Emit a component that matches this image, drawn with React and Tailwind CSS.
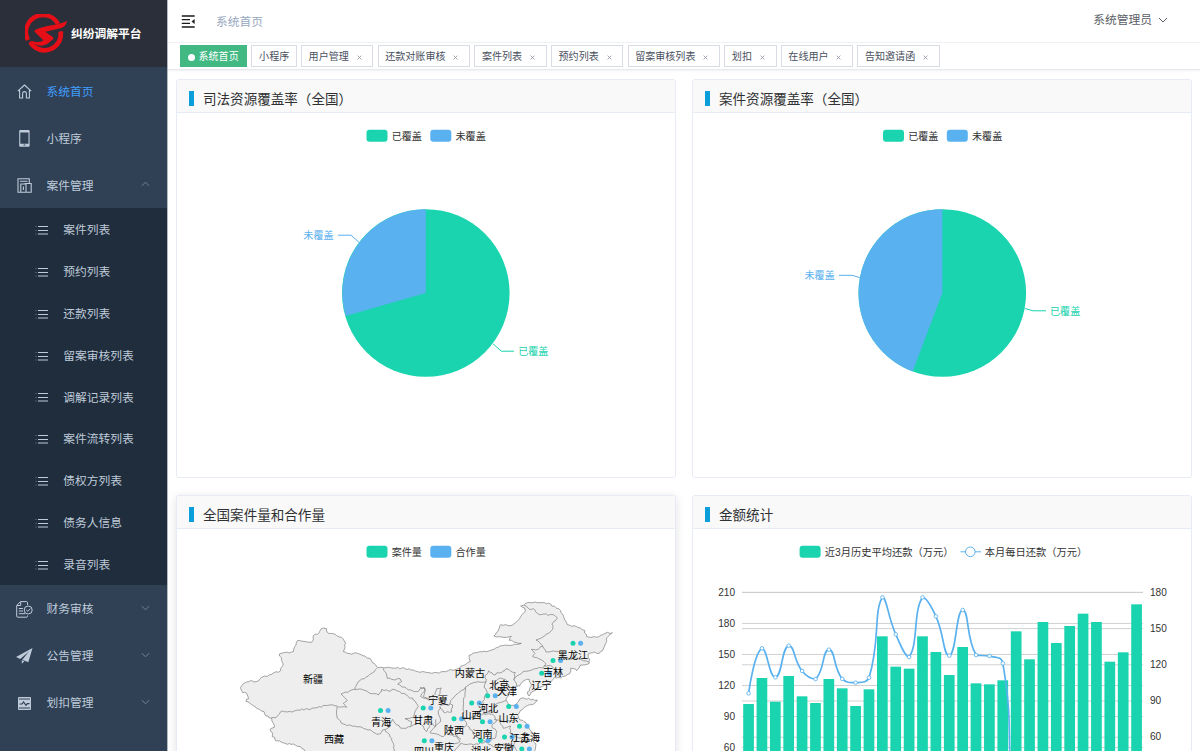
import React from 'react';

const GREEN = '#19d4ae';
const BLUE = '#5ab1ef';
const CHART_FONT = '"Liberation Sans", "Noto Sans CJK SC", sans-serif';

/* ---------- icons ---------- */

function Logo() {
  return (
    <svg className="h-[40px] w-[42px] shrink-0" viewBox="75 42 126 120" fill="none">
      <path d="M84 120A50 50 0 0 1 174 72" stroke="#e60f17" strokeWidth="13" />
      <path d="M182 94A49 49 0 0 1 91 126" stroke="#e60f17" strokeWidth="14" />
      <path
        d="M201 63Q197 80 184 84L136 95L158 111Q164 116 156 120Q140 137 124 137Q105 136 88 124L112 126Q125 127 130 121L104 95Q101 91 107 89Q125 80 165 74Q185 71 201 63Z"
        fill="#e60f17"
      />
    </svg>
  );
}

function HomeIcon() {
  return (
    <svg className="h-[15px] w-[15px]" viewBox="0 0 15 15" fill="none" stroke="currentColor" strokeWidth="1.1" strokeLinejoin="round">
      <path d="M.8 7.2L7.5 1L14.2 7.2M2.6 6V14H5.6V9.5a1.9 1.9 0 0 1 3.8 0V14h3V6" />
    </svg>
  );
}

function PhoneIcon() {
  return (
    <svg className="h-[17px] w-[15px]" viewBox="0 0 15 17">
      <path
        fillRule="evenodd"
        fill="currentColor"
        d="M3.2 0h8.4q1 0 1 1v14.8q0 1-1 1H3.2q-1 0-1-1V1q0-1 1-1zM3.3 2.4v11.3h8.2V2.4zM6.6 14.6v1h1.8v-1z"
      />
    </svg>
  );
}

function CaseIcon() {
  return (
    <svg className="h-[15px] w-[15px]" viewBox="0 0 15 15" fill="none" stroke="currentColor" strokeWidth="1.1">
      <path d="M3.5 14.3H1V.8H12.3V5M3 3.2H10.5" />
      <path d="M3.8 14.3V6H9V14.3ZM7.6 5.5H14.2V14.3H3.5M6.4 8.5V12" />
    </svg>
  );
}

function ListIcon() {
  return (
    <svg className="h-[10px] w-[14px]" viewBox="0 0 14 10" stroke="currentColor" strokeWidth="1">
      <path d="M3 1.5H13M3 5.5H13M3 9H13" />
      <path d="M.5 1.5H1.5M.5 5.5H1.5M.5 9H1.5" opacity=".5" />
    </svg>
  );
}

function AuditIcon() {
  return (
    <svg className="h-[17px] w-[17px]" viewBox="0 0 17 17" fill="none" stroke="currentColor" strokeWidth="1">
      <path d="M11.5 4V1.6Q11.5.6 10.5.6H4.5L.7 4.4V15.2Q.7 16.2 1.7 16.2H10.5Q11.5 16.2 11.5 14.5M4.7.8V4.5H1" />
      <circle cx="12.2" cy="9" r="4" />
      <path d="M10.3 8.9L11.8 10.3L14.3 7.6M2.8 7.5H7M2.8 10H7M2.8 12.7H9" />
    </svg>
  );
}

function PlaneIcon() {
  return (
    <svg className="h-[16px] w-[17px]" viewBox="0 0 17 16" fill="currentColor">
      <path d="M16.5 0L0 9L4.3 10.9L13.2 3.2L6.3 11.7L12.3 14.2ZM5.8 12.3V15.8L8.4 13.3Z" />
    </svg>
  );
}

function WaveIcon() {
  return (
    <svg className="h-[13px] w-[13px]" viewBox="0 0 13 13" fill="none">
      <rect width="13" height="13" rx="1" fill="currentColor" />
      <path d="M1 2H12M1 11H12" stroke="#304156" strokeWidth="1" />
      <path d="M1.5 7H4L5.5 5L8 8.3L9.3 6.6H11.5" stroke="#304156" strokeWidth="1.2" />
    </svg>
  );
}

function Chevron({ up, className }) {
  return (
    <svg className={className} viewBox="0 0 10 6" fill="none" stroke="currentColor" strokeWidth="1">
      <path d={up ? 'M1 5L5 1L9 5' : 'M1 1L5 5L9 1'} />
    </svg>
  );
}

/* ---------- sidebar ---------- */

function MenuItem({ icon, label, active, arrow }) {
  return (
    <div className="flex h-[46.9px] shrink-0 items-center pt-0.5 text-[#bfcbd9]">
      <span className="ml-[15.5px] flex w-[18px] justify-center">{icon}</span>
      <span className={active ? 'ml-[13px] flex-1 text-[#409eff]' : 'ml-[13px] flex-1'}>{label}</span>
      {arrow && <Chevron up={arrow === 'up'} className="mr-[17px] mb-[3px] h-[6px] w-[9px] text-[#808895]" />}
    </div>
  );
}

const SUB_ITEMS = ['案件列表', '预约列表', '还款列表', '留案审核列表', '调解记录列表', '案件流转列表', '债权方列表', '债务人信息', '录音列表'];

function Sidebar() {
  return (
    <aside className="flex w-[168px] shrink-0 flex-col overflow-hidden border-r border-[#b5bac1] bg-[#304156] text-[11.75px]">
      <div className="flex h-[67.4px] shrink-0 items-center bg-[#2b2f3a] pl-[25px]">
        <Logo />
        <span className="ml-1 text-[11.75px] font-bold text-white">纠纷调解平台</span>
      </div>
      <MenuItem icon={<HomeIcon />} label="系统首页" active />
      <MenuItem icon={<PhoneIcon />} label="小程序" />
      <MenuItem icon={<CaseIcon />} label="案件管理" arrow="up" />
      <div className="shrink-0 bg-[#1f2d3d] text-[#bfcbd9]">
        {SUB_ITEMS.map((label) => (
          <div key={label} className="flex h-[41.87px] items-center pt-0.5 pl-[35px]">
            <ListIcon />
            <span className="ml-[14.2px]">{label}</span>
          </div>
        ))}
      </div>
      <MenuItem icon={<AuditIcon />} label="财务审核" arrow="down" />
      <MenuItem icon={<PlaneIcon />} label="公告管理" arrow="down" />
      <MenuItem icon={<WaveIcon />} label="划扣管理" arrow="down" />
    </aside>
  );
}

/* ---------- header ---------- */

const TAGS = [
  { label: '小程序', fixed: true },
  { label: '用户管理' },
  { label: '还款对账审核' },
  { label: '案件列表' },
  { label: '预约列表' },
  { label: '留案审核列表' },
  { label: '划扣' },
  { label: '在线用户' },
  { label: '告知邀请函' },
];

function Navbar() {
  return (
    <div className="flex h-[42px] shrink-0 items-center justify-between pr-8 pl-[13px]">
      <div className="flex items-center">
        <svg className="h-[13px] w-[14px]" viewBox="0 0 14 13" stroke="#1a1a1a" strokeWidth="1.3">
          <path d="M.8 1H13.7M.8 4.7H9M.8 8.4H9M.8 12H13.7" />
          <path d="M13.4 4.5V8.5L10.8 6.5Z" fill="#1a1a1a" strokeWidth=".5" />
        </svg>
        <span className="ml-[21px] pt-0.5 text-[11.75px] text-[#97a8be]">系统首页</span>
      </div>
      <div className="mb-[3px] flex items-center text-[11.75px] text-[#5a5e66]">
        系统管理员
        <Chevron className="ml-1.5 h-[6px] w-[10px]" />
      </div>
    </div>
  );
}

function TagsView() {
  return (
    <div className="flex h-[28px] shrink-0 items-start gap-[4.2px] border-t border-b border-t-[#f0f1f3] border-b-[#e6e9ef] pt-[2px] pl-3 text-[10.05px] text-[#495060] shadow-[0_1px_2px_rgba(0,0,0,0.06)]">
      <div className="flex h-[22px] w-[67.3px] items-center bg-[#42b983] pt-0.5 pl-[7.5px] text-white">
        <span className="mr-1 h-[7px] w-[7px] rounded-full bg-white" />
        系统首页
      </div>
      {TAGS.map((t) => (
        <div key={t.label} className="flex h-[22px] items-center border border-[#d8dce5] px-[6.6px] pt-0.5">
          {t.label}
          {!t.fixed && (
            <svg className="mt-px mr-[4.2px] ml-[7.85px] h-[5px] w-[5px]" viewBox="0 0 5 5" stroke="#8a909b" strokeWidth=".8">
              <path d="M.6.6L4.4 4.4M4.4.6L.6 4.4" />
            </svg>
          )}
        </div>
      ))}
    </div>
  );
}

/* ---------- charts ---------- */

function LegendBox({ x, y, color, label, size }) {
  return (
    <g>
      <rect x={x} y={y - 6} width="21" height="12" rx="3" fill={color} />
      <text x={x + 25.2} y={y + 3.7} fill="#333" fontSize={size}>{label}</text>
    </g>
  );
}

function PieChart({ left0, cx, end, left, right }) {
  const cy = 293;
  const r = 83.8;
  const [ex, ey] = end;
  return (
    <svg className="block h-[364px] w-full" viewBox={`${left0} 113 498 364`} fontFamily={CHART_FONT} fontSize="10.1">
      <LegendBox x={cx - 59.3} y={135.8} color={GREEN} label="已覆盖" />
      <LegendBox x={cx + 4.5} y={135.8} color={BLUE} label="未覆盖" />
      <circle cx={cx} cy={cy} r={r} fill={GREEN} />
      <path d={`M${cx} ${cy}L${ex} ${ey}A${r} ${r} 0 0 1 ${cx} ${cy - r}Z`} fill={BLUE} />
      <path d={left.line} fill="none" stroke={BLUE} />
      <path d={right.line} fill="none" stroke={GREEN} />
      <text x={left.x} y={left.y} fill={BLUE}>未覆盖</text>
      <text x={right.x} y={right.y} fill={GREEN}>已覆盖</text>
    </svg>
  );
}

// Adds small deterministic wiggles to a polyline so borders look surveyed.
function rough(points, close) {
  let seed = 7;
  const rnd = () => {
    seed = (seed * 1103 + 4721) % 9973;
    return seed / 9973 - 0.5;
  };
  let d = `M${points[0][0]} ${points[0][1]}`;
  for (let i = 1; i < points.length; i += 1) {
    const [x0, y0] = points[i - 1];
    const [x1, y1] = points[i];
    const len = Math.hypot(x1 - x0, y1 - y0);
    const n = Math.max(1, Math.round(len / 7));
    for (let k = 1; k <= n; k += 1) {
      const j = k === n ? 0 : 5;
      d += `L${(x0 + ((x1 - x0) * k) / n + rnd() * j).toFixed(1)} ${(y0 + ((y1 - y0) * k) / n + rnd() * j).toFixed(1)}`;
    }
  }
  return close ? `${d}Z` : d;
}

const OUTLINE = [
  [32, 292], [42, 280], [62, 272], [72, 276], [85, 273], [95, 262], [125, 253], [152, 242], [160, 222], [148, 192], [190, 185], [194, 170], [203, 151], [245, 157], [250, 150], [250, 137],
  [268, 128], [274, 116], [290, 116], [292, 127], [320, 137], [338, 145], [347, 160], [340, 185], [352, 190], [385, 191], [420, 205], [442, 232],
  [460, 233], [525, 235], [570, 247], [620, 248], [675, 239], [700, 226], [721, 214], [717, 196], [728, 190], [770, 185],
  [810, 168], [860, 163], [874, 160], [838, 151], [844, 139], [815, 141], [792, 138], [812, 104], [846, 106], [860, 96], [886, 64], [884, 54],
  [872, 48], [892, 38], [930, 38], [962, 42], [992, 62], [1012, 104], [1040, 110], [1064, 121], [1070, 140], [1100, 142],
  [1125, 130], [1147, 128], [1132, 142], [1124, 168], [1108, 190], [1092, 186], [1075, 192], [1078, 220], [1050, 226], [1040, 242],
  [1022, 234], [1020, 250], [992, 264], [974, 262], [960, 280], [930, 292], [910, 304], [897, 318], [892, 306], [904, 288],
  [898, 268], [882, 272], [868, 288], [850, 292], [834, 310], [828, 328], [836, 344], [856, 345], [876, 324], [922, 330],
  [914, 340], [886, 350], [862, 374], [866, 384], [888, 398], [904, 425], [920, 440], [908, 450], [918, 462], [912, 490],
  [225, 490], [222, 478], [190, 462], [165, 460], [135, 450], [120, 418], [133, 412], [130, 400], [125, 384], [108, 378], [102, 365], [80, 355], [60, 340],
  [48, 334], [56, 326], [50, 310], [38, 308], [32, 292],
];

const BORDERS = [
  [[125, 382], [138, 383], [152, 365], [185, 366], [215, 357], [240, 360], [268, 350], [300, 345], [325, 351], [350, 352], [340, 340], [352, 332], [333, 312], [375, 298], [385, 275], [415, 258], [440, 235]],
  [[375, 298], [400, 300], [420, 310], [445, 315], [455, 298], [475, 303], [495, 299], [530, 315], [550, 330], [565, 350], [555, 365], [552, 382], [525, 386], [545, 395], [543, 410], [520, 415], [500, 405], [488, 388], [480, 410], [458, 420], [452, 431], [440, 433], [425, 422], [400, 415], [340, 402], [322, 385], [320, 350]],
  [[460, 235], [472, 265], [495, 270], [510, 266], [515, 275], [503, 282], [535, 300], [560, 305], [582, 291], [585, 300], [572, 320], [595, 330], [612, 324]],
  [[465, 420], [480, 440], [490, 460], [492, 488]],
  [[545, 408], [560, 400], [575, 405], [590, 425], [605, 400], [615, 410], [618, 388]],
  [[570, 292], [585, 296], [580, 320], [600, 328]],
  [[615, 315], [620, 296], [634, 294], [630, 310], [620, 322], [640, 342], [668, 345], [665, 366], [640, 366], [630, 350], [625, 372], [632, 395], [615, 410], [600, 428], [620, 432], [640, 440], [648, 430], [680, 438], [693, 448]],
  [[630, 345], [655, 346], [672, 322], [706, 292], [705, 320], [700, 345], [700, 380], [710, 405], [690, 420], [680, 438], [690, 455], [670, 462]],
  [[706, 292], [730, 278], [768, 276], [766, 256], [776, 242], [790, 254], [815, 248], [828, 236], [856, 248], [852, 270], [860, 288]],
  [[850, 268], [876, 248], [905, 240], [942, 230], [948, 222], [930, 208], [908, 200], [915, 190], [904, 178], [925, 178], [938, 168], [918, 150], [944, 138], [968, 118], [966, 102], [982, 84], [970, 74], [928, 74], [915, 60], [895, 55], [882, 45]],
  [[938, 168], [948, 186], [985, 184], [1000, 205], [1040, 205], [1076, 216]],
  [[942, 228], [965, 228], [978, 245], [990, 262]],
  [[768, 276], [762, 292], [772, 308], [758, 335], [760, 370], [730, 382], [702, 385]],
  [[760, 370], [792, 366], [795, 345], [828, 332]],
  [[795, 275], [812, 264], [830, 272], [836, 290], [822, 300], [800, 296], [790, 285], [795, 275]],
  [[760, 372], [790, 375], [800, 392], [785, 408], [800, 425], [795, 445], [770, 455], [740, 442], [712, 408]],
  [[792, 388], [820, 396], [850, 392], [864, 384]],
  [[810, 396], [820, 415], [842, 408], [840, 430], [860, 440], [850, 466], [865, 488]],
  [[860, 440], [880, 450], [908, 450]],
  [[670, 488], [690, 462], [730, 465], [765, 455], [790, 470], [820, 462], [850, 470]],
];

const PROVINCES = [
  ['新疆', 313, 679], ['西藏', 334, 739.5], ['青海', 381, 722], ['甘肃', 423, 720], ['宁夏', 438, 700.5], ['内蒙古', 470, 673],
  ['北京', 499, 685], ['天津', 507, 691.5], ['河北', 488, 708], ['山西', 471.5, 715], ['陕西', 454, 730], ['河南', 482.5, 734],
  ['山东', 508.5, 718.5], ['江苏', 520, 738], ['上海', 530, 737], ['安徽', 504, 748], ['湖北', 481, 751], ['重庆', 444, 747.5],
  ['四川', 424, 751], ['黑龙江', 573, 655], ['吉林', 553, 672.5], ['辽宁', 541.5, 685.5],
];

const MARKS = [
  [380.5, 710.5], [423.2, 708], [424.3, 740.7], [454, 718.8], [471.7, 703], [487.6, 695.8], [482.5, 721.8], [480.5, 740.5],
  [508.7, 706.6], [519.5, 726.2], [504.5, 737], [521.8, 749], [573, 643.3], [553, 660.5], [541.7, 673.2],
];

function MapChart() {
  return (
    <svg className="block h-[223px] w-full" viewBox="177 529 498 223" fontFamily={CHART_FONT} fontSize="10.1">
      <LegendBox x={366.5} y={551.8} color={GREEN} label="案件量" />
      <LegendBox x={430.3} y={551.8} color={BLUE} label="合作量" />
      <g transform="translate(230 590) scale(0.33333)" stroke="#6b6b6b" strokeWidth="1.8" strokeLinejoin="round">
        <path d={rough(OUTLINE, true)} fill="#eee" />
        {BORDERS.map((b, i) => (
          <path key={i} d={rough(b)} fill="none" />
        ))}
      </g>
      {MARKS.map(([x, y]) => (
        <g key={`${x}-${y}`}>
          <circle cx={x} cy={y} r="2.5" fill={GREEN} />
          <circle cx={x + 7.6} cy={y} r="2.5" fill={BLUE} />
        </g>
      ))}
      {PROVINCES.map(([name, x, y]) => (
        <text key={name} x={x} y={y + 3.7} textAnchor="middle" fill="#000">{name}</text>
      ))}
    </svg>
  );
}

const BAR_TOPS = [642, 564, 635, 558, 619, 639, 567, 595, 648, 598, 439, 530, 536, 439, 486, 555, 471, 580, 583, 571, 424, 508, 396, 459, 408, 371, 396, 515, 487, 343];
const LINE_TOPS = [610, 475, 562, 467, 543, 567, 479, 567, 578, 563, 322, 433, 501, 322, 379, 497, 360, 495, 498, 520, 958, 958];

// Smooth curve whose control points stay inside the span of neighbouring points.
function smoothPath(pts) {
  const clamp = (v, a, b) => Math.max(Math.min(a, b), Math.min(Math.max(a, b), v));
  let d = `M${pts[0][0]} ${pts[0][1]}`;
  let cp = pts[0];
  for (let i = 1; i < pts.length; i += 1) {
    const p = pts[i];
    const prev = pts[i - 1];
    const next = pts[i + 1];
    let c0 = p;
    let c1 = p;
    if (next) {
      const a = Math.hypot(p[0] - prev[0], p[1] - prev[1]);
      const b = Math.hypot(next[0] - p[0], next[1] - p[1]);
      const t = b / (a + b);
      const v = [next[0] - prev[0], next[1] - prev[1]];
      c0 = [0, 1].map((k) => clamp(p[k] - v[k] * 0.5 * (1 - t), prev[k], p[k]));
      c1 = [0, 1].map((k) => clamp(p[k] + v[k] * 0.5 * t, next[k], p[k]));
    }
    d += `C${cp[0]} ${cp[1]} ${c0[0]} ${c0[1]} ${p[0]} ${p[1]}`;
    cp = c1;
  }
  return d;
}

function AmountChart() {
  const toY = (v) => 490 + v / 3;
  const line = LINE_TOPS.map((v, i) => [748.6 + i * 13.38, toY(v)]);
  const leftAxis = [210, 180, 150, 120, 90, 60];
  const rightAxis = [180, 150, 120, 90, 60];
  return (
    <svg className="block h-[223px] w-full" viewBox="693 529 498 223" fontFamily={CHART_FONT} fontSize="10.1">
      <LegendBox x={799.6} y={551.8} color={GREEN} label="近3月历史平均还款（万元）" size="10.25" />
      <path d="M960.5 551.8H981" stroke={BLUE} />
      <circle cx="970.3" cy="551.8" r="4.8" fill="#fff" stroke={BLUE} />
      <text x="984.8" y="555.5" fill="#333" fontSize="10.25">本月每日还款（万元）</text>
      {leftAxis.map((v, i) => (
        <g key={v}>
          <path d={`M742 ${592.4 + i * 31.03}H1143`} stroke="#ccc" strokeWidth=".9" />
          <text x="735" y={595.5 + i * 31.03} textAnchor="end" fill="#333">{v}</text>
        </g>
      ))}
      {rightAxis.map((v, i) => (
        <g key={v}>
          <path d={`M742 ${592.4 + i * 36.2}H1143`} stroke="#ccc" strokeWidth=".9" />
          <text x="1150" y={595.5 + i * 36.2} fill="#333">{v}</text>
        </g>
      ))}
      {BAR_TOPS.map((v, i) => (
        <rect key={i} x={743.2 + i * 13.38} y={toY(v)} width="10.7" height={809 - toY(v)} fill={GREEN} />
      ))}
      <path d={smoothPath(line)} fill="none" stroke={BLUE} strokeWidth="1.7" />
      {line.map(([x, y], i) => (
        <circle key={i} cx={x} cy={y} r="1.8" fill="#fff" stroke={BLUE} strokeWidth=".85" />
      ))}
    </svg>
  );
}

/* ---------- page ---------- */

function Card({ title, raised, children }) {
  return (
    <section
      className={
        raised
          ? 'h-[399px] rounded-[3px] border border-[#e6ebf5] bg-white shadow-[0_2px_10px_rgba(0,0,0,0.12)]'
          : 'h-[399px] rounded-[3px] border border-[#e6ebf5] bg-white'
      }
    >
      <div className="flex h-[33px] items-center rounded-t-[3px] border-b border-[#e6ebf5] bg-[#f9f9f9] pt-[6px] pl-3">
        <span className="mb-[2px] h-[15px] w-[5px] bg-[#0a9fdb]" />
        <span className="ml-[9px] pt-px text-[13.55px] leading-none text-[#303133]">{title}</span>
      </div>
      {children}
    </section>
  );
}

export default function App() {
  return (
    <div className="flex h-[751px] w-[1200px] overflow-hidden bg-white font-['Liberation_Sans','Noto_Sans_CJK_SC',sans-serif]">
      <Sidebar />
      <main className="flex min-w-0 flex-1 flex-col">
        <Navbar />
        <TagsView />
        <div className="grid grid-cols-[500px_500px] gap-x-4 gap-y-[17px] pt-[9px] pl-2">
          <Card title="司法资源覆盖率（全国）">
            <PieChart
              left0={177}
              cx={425.8}
              end={[345.6, 315.9]}
              left={{ line: 'M338 235.2H351L359 242.3', x: 303.3, y: 239 }}
              right={{ line: 'M493 343.8L501.3 351.2H514', x: 518.2, y: 355 }}
            />
          </Card>
          <Card title="案件资源覆盖率（全国）">
            <PieChart
              left0={693}
              cx={942.3}
              end={[912.7, 371.4]}
              left={{ line: 'M839 275.3H852L860.5 277.8', x: 804.5, y: 279 }}
              right={{ line: 'M1025 308.5L1033 310.8H1046', x: 1050, y: 314.5 }}
            />
          </Card>
          <Card title="全国案件量和合作量" raised>
            <MapChart />
          </Card>
          <Card title="金额统计">
            <AmountChart />
          </Card>
        </div>
      </main>
    </div>
  );
}
